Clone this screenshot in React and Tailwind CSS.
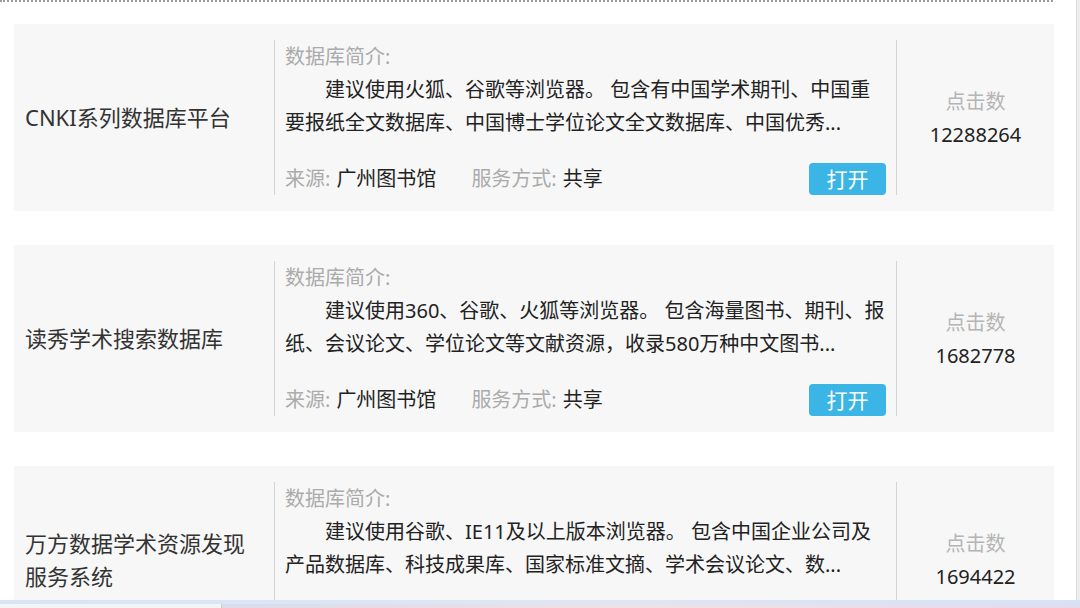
import React from "react";

const items = [
  {
    title: "CNKI系列数据库平台",
    desc: "建议使用火狐、谷歌等浏览器。 包含有中国学术期刊、中国重要报纸全文数据库、中国博士学位论文全文数据库、中国优秀...",
    source: "广州图书馆",
    mode: "共享",
    clicks: "12288264",
  },
  {
    title: "读秀学术搜索数据库",
    desc: "建议使用360、谷歌、火狐等浏览器。 包含海量图书、期刊、报纸、会议论文、学位论文等文献资源，收录580万种中文图书...",
    source: "广州图书馆",
    mode: "共享",
    clicks: "1682778",
  },
  {
    title: "万方数据学术资源发现服务系统",
    desc: "建议使用谷歌、IE11及以上版本浏览器。 包含中国企业公司及产品数据库、科技成果库、国家标准文摘、学术会议论文、数...",
    source: "广州图书馆",
    mode: "共享",
    clicks: "1694422",
  },
];

function DbCard({ item }) {
  return (
    <div className="flex bg-[#f7f7f7] py-4">
      {/* title */}
      <div className="w-[260px] shrink-0 flex items-center pl-[11px] pr-4 text-[22px] leading-[33px] text-[#333]">
        {item.title}
      </div>

      {/* intro */}
      <div className="w-[623px] shrink-0 h-[155px] flex flex-col border-l border-r border-[#d4d4d4] pl-[10px] pr-[10px]">
        <div className="text-[20px] leading-[33px] text-[#ababab]">数据库简介:</div>
        <p className="text-[20px] leading-[33px] text-[#222] indent-[2em] line-clamp-2">
          {item.desc}
        </p>
        <div className="mt-auto flex items-center h-8 text-[20px]">
          <span className="text-[#ababab]">来源:</span>
          <span className="ml-[6px] text-[#222]">{item.source}</span>
          <span className="ml-[35px] text-[#ababab]">服务方式:</span>
          <span className="ml-[6px] text-[#222]">{item.mode}</span>
          <button className="ml-auto w-[77px] h-8 rounded-[4px] bg-[#3bb5e6] text-white text-[21px] leading-8">
            打开
          </button>
        </div>
      </div>

      {/* clicks */}
      <div className="flex-1 flex flex-col items-center justify-center text-[20px] leading-[33px]">
        <span className="text-[#b5b5b5]">点击数</span>
        <span className="text-[#222]">{item.clicks}</span>
      </div>
    </div>
  );
}

export default function App() {
  return (
    <div
      className="w-[1080px] h-[608px] overflow-hidden bg-white flex flex-col"
      style={{ fontFamily: '"Noto Sans", "Noto Sans CJK SC", sans-serif' }}
    >
      <div className="flex flex-1 min-h-0">
        <div className="flex-1 overflow-hidden">
          <div className="w-[1053px] border-t-2 border-dotted border-[#9a9a9a]"></div>
          <div className="pl-[14px] pr-[22px] pt-[22px] flex flex-col gap-[34px]">
            {items.map((item) => (
              <DbCard key={item.title} item={item} />
            ))}
          </div>
        </div>
        <div className="w-[4px] bg-[#eeeeee] border-l border-[#dcdcdc]"></div>
      </div>
      <div className="h-[8px] shrink-0 flex flex-col">
        <div className="h-[4px] bg-gradient-to-r from-[#d8e4f6] via-[#dde6f5] to-[#d6e2f6]"></div>
        <div className="h-[4px] flex">
          <div className="w-[222px] bg-[#f4f4f6] border-r border-[#cfcfd6]"></div>
          <div className="flex-1 bg-gradient-to-r from-[#dcdbea] via-[#efe2e6] to-[#e0dcef]"></div>
        </div>
      </div>
    </div>
  );
}
